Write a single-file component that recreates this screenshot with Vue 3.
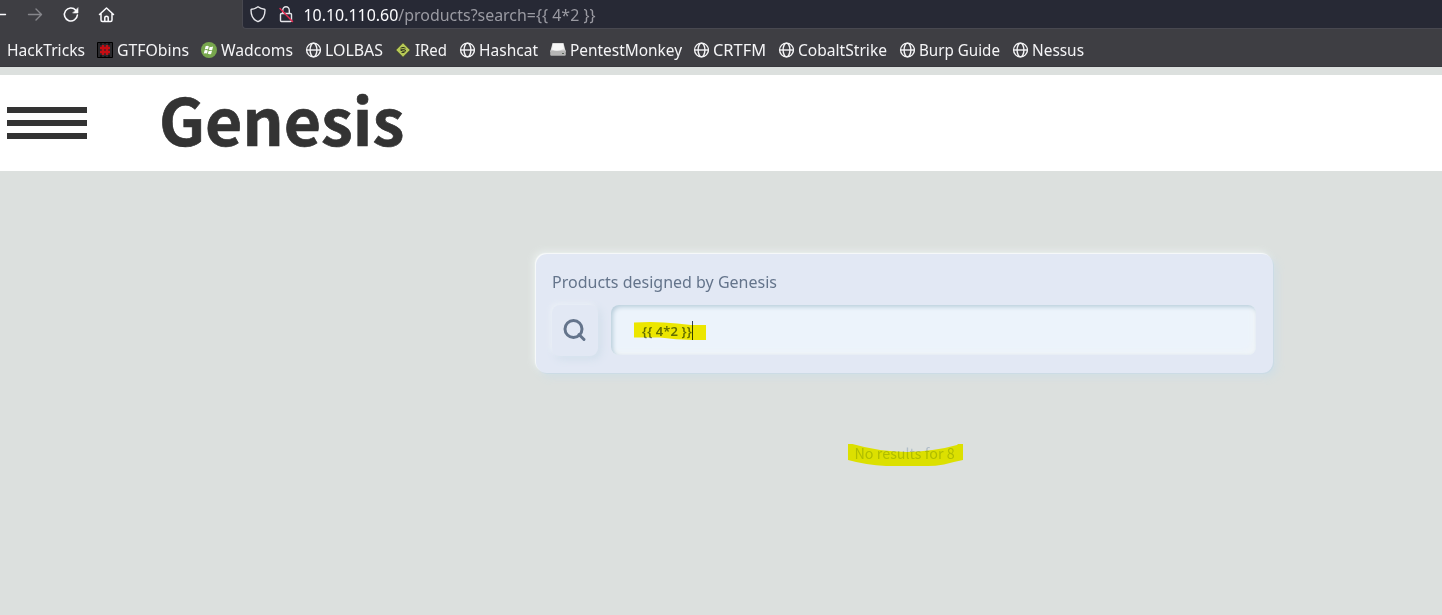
<script setup>
const bookmarks = [
  { label: 'HackTricks', icon: 'none', start: -13, text: 79 },
  { label: 'GTFObins', icon: 'hash', start: 97, text: 73 },
  { label: 'Wadcoms', icon: 'windows', start: 201, text: 73 },
  { label: 'LOLBAS', icon: 'globe', start: 305, text: 59 },
  { label: 'IRed', icon: 'diamond', start: 395, text: 33 },
  { label: 'Hashcat', icon: 'globe', start: 459, text: 60 },
  { label: 'PentestMonkey', icon: 'drive', start: 550, text: 113 },
  { label: 'CRTFM', icon: 'globe', start: 693, text: 54 },
  { label: 'CobaltStrike', icon: 'globe', start: 778, text: 90 },
  { label: 'Burp Guide', icon: 'globe', start: 899, text: 82 },
  { label: 'Nessus', icon: 'globe', start: 1012, text: 53 },
]
const columns = bookmarks
  .map((b, i) => (i < bookmarks.length - 1 ? `${bookmarks[i + 1].start - b.start}px` : '100px'))
  .join(' ')
</script>

<template>
  <div class="screen">
    <div class="chrome">
      <div class="toolbar">
        <svg class="nav" width="242" height="29" viewBox="0 0 242 29" fill="none" stroke="#fbfbfe" stroke-width="1.4" stroke-linecap="round" stroke-linejoin="round">
          <path d="M-6 14.5H5.5" />
          <path d="M28.5 14.5H41M36 9l5.5 5.5L36 20" stroke="#86868b" />
          <path d="M75.8 10.2A6.5 6.5 0 1 0 77.4 15" stroke-width="1.6" />
          <path d="M78 8v5h-5z" fill="#fbfbfe" stroke-width=".6" />
          <path d="M99.5 14.5L106.500 8l7 6.500M101 13.500V20q0 1.500 1.500 1.500h8q1.500 0 1.500-1.500v-6.500M104.800 21v-3.500q0-1.200 1.700-1.200t1.700 1.200V21" stroke-width="1.500" />
        </svg>
        <div class="address">
          <svg width="60" height="29" viewBox="0 0 60 29" fill="none" stroke="#e5e5ea" stroke-width="1.400" stroke-linecap="round" stroke-linejoin="round">
            <path d="M15 6.700C17 8.300 19 9 21.500 9.200Q22 9.300 22 10C22 16 19.500 20 15 21.700C10.500 20 8 16 8 10Q8 9.300 8.500 9.200C11 9 13 8.300 15 6.700Z" />
            <path d="M39.700 13V10.500a3.300 3.800 0 0 1 6.600 0V13M38.500 13.500h9q1 0 1 1v6q0 1-1 1h-9q-1 0-1-1v-6q0-1 1-1Z" />
            <path d="M37 8.500L49.500 21.500" stroke="#e22850" stroke-width="1.500" />
          </svg>
          <svg class="url" width="294" height="29">
            <text x="0.500" y="20.500" textLength="292" lengthAdjust="spacingAndGlyphs"><tspan class="host">10.10.110.60</tspan>/products?search=<tspan>{{ '\{\{ 4*2 \}\}' }}</tspan></text>
          </svg>
        </div>
      </div>
      <nav class="bookmarks" :style="{ gridTemplateColumns: columns }">
        <div v-for="b in bookmarks" :key="b.label" class="bookmark">
          <svg width="16" height="16" viewBox="0 0 16 16" class="favicon">
            <g v-if="b.icon === 'globe'" fill="none" stroke="#f4f4f6" stroke-width="1.400">
              <circle cx="8.500" cy="8" r="6.900" />
              <ellipse cx="8.500" cy="8" rx="3.400" ry="6.900" />
              <path d="M1.500 8h14" />
            </g>
            <g v-else-if="b.icon === 'hash'">
              <path d="M.5.500h15v15H.5z" fill="#29292d" stroke="#000" />
              <path d="M4 0v3M8 0v2M12 0v3M4 13v3M8 14v2M12 13v3" stroke="#000" />
              <path d="M6 3v10M10 3v10M3 6h10M3 10h10" stroke="#c50d13" stroke-width="2.400" />
            </g>
            <g v-else-if="b.icon === 'windows'">
              <circle cx="8" cy="8" r="8" fill="#77a64d" />
              <path d="M4.600 4.200q1.700-.8 3.200.1L7.100 7.500q-1.700-.8-3.300 0zM8.700 4.700q1.700.7 3.400-.1l-.9 3.300q-1.600.7-3.300-.1zM3.600 8.300q1.700-.8 3.200.1l-.8 3.200q-1.600-.8-3.200 0zM7.700 8.700q1.700.7 3.300 0l-.9 3.200q-1.600.7-3.300-.1z" fill="#fff" />
            </g>
            <g v-else-if="b.icon === 'diamond'">
              <path d="M8 .8L15.200 8 8 15.200.8 8z" fill="#b7c957" stroke="#343820" stroke-width=".6" />
              <path d="M5.500 6.200q2.500-1.700 5 0M5.500 8l2.500-.8 2.500 1v1H8L5.500 8M6.500 10.500h3" fill="none" stroke="#343820" />
            </g>
            <g v-else-if="b.icon === 'drive'">
              <path d="M2.500 1h11l2.300 9H.2z" fill="#dedede" />
              <path d="M.2 8.500h15.600V12.500q0 1.200-1.200 1.200H1.400q-1.200 0-1.200-1.200z" fill="#b5b5b5" />
              <path d="M3 2h10l1 4.500q-6 4-12 1z" fill="#f7f7f7" />
              <path d="M12 11.500h2" stroke="#58635a" />
            </g>
          </svg>
          <svg class="label" :width="b.text + 2" height="22">
            <text x="0" y="17" :textLength="b.text - 1" lengthAdjust="spacingAndGlyphs">{{ b.label }}</text>
          </svg>
        </div>
      </nav>
    </div>

    <header class="site-header">
      <div class="menu"><i></i><i></i><i></i></div>
      <h1>Genesis</h1>
    </header>

    <main>
      <section class="panel">
        <label>Products designed by Genesis</label>
        <div class="row">
          <div class="search-btn">
            <svg width="24" height="24" viewBox="0 0 24 24" fill="none" stroke="#64748b" stroke-width="3">
              <circle cx="10.500" cy="11" r="8.500" />
              <path d="M16 16.500L21 21.500" stroke-linecap="round" />
            </svg>
          </div>
          <div class="field">
            <span class="query">{{ '\{\{ 4*2 \}\}' }}</span><span class="caret"></span>
            <svg class="marker" width="72" height="20" viewBox="0 0 72 20"><path d="M0 1.500Q22 0 43 2.500L57 4H72V19H58Q42 18.500 26 16.500H0Z" fill="#fff200" /></svg>
          </div>
        </div>
      </section>
      <div class="results">
        <span>No results for 8</span>
        <svg class="marker" width="116" height="24" viewBox="0 0 116 24"><path d="M0 1H4.500Q30 8.500 59 9Q88 8 109 2L110 1H115V17Q105 19 96 21.500Q87 23 80 23H38Q18 22 0 17Z" fill="#ff0" /></svg>
      </div>
    </main>
  </div>
</template>

<style>
body { margin: 0; background: #dce0de; }
</style>

<style scoped>
.screen { width: 1442px; height: 615px; overflow: hidden; background: #dce0de; font-family: "Noto Sans", sans-serif; }
.chrome { height: 67px; background: #3e3e43; box-sizing: border-box; border-bottom: 1px solid #38383d; overflow: hidden; }
.toolbar { display: flex; height: 29px; }
.nav { flex: none; }
.address { flex: 1; display: flex; background: #272935; border-left: 1px solid #484850; border-bottom: 1px solid #484850; border-bottom-left-radius: 4px; }
.url text { font-size: 16px; fill: #9a9aa2; }
.url .host { fill: #fbfbfe; }
.bookmarks { display: grid; margin-left: -13px; height: 42px; align-items: center; }
.bookmark { display: flex; align-items: center; gap: 4px; }
.favicon, .label { flex: none; }
.label text { font-size: 15.500px; fill: #f4f4f6; }
.site-header { margin-top: 8px; height: 96px; background: #fff; display: flex; align-items: center; }
.menu { width: 80px; margin-left: 7px; display: grid; gap: 7px; }
.menu i { height: 6px; background: #333; }
h1 { margin: 0 0 0 72px; padding-bottom: 10px; font: 700 64.300px/86px "Noto Sans CJK JP", "Noto Sans", sans-serif; color: #333; -webkit-text-stroke: .7px #333; }
main { padding-top: 83px; }
.panel { box-sizing: border-box; width: 737px; height: 119px; margin-left: 536px; padding: 16px 17px 18px 16px; border-radius: 11px; background: #e2e8f4; box-shadow: -1px -1px 1px #f8fafb, 1px 1px 1px #cbdbe5, -3px -3px 7px #e9eeec, 4px 4px 9px #d0dee5; }
.panel label { display: block; font-size: 16px; line-height: 24px; color: #64748b; }
.row { display: flex; gap: 13px; margin-top: 11px; }
.search-btn { width: 46px; height: 51px; border-radius: 8px; display: grid; place-items: center; background: #e2e8f4; box-shadow: -2px -2px 5px #ebf0f7, 3px 3px 8px #d0deea; }
.search-btn svg { margin-bottom: 1px; }
.field { flex: 1; position: relative; display: flex; align-items: center; padding-left: 31px; height: 50px; border-radius: 8px; box-sizing: border-box; background: #ecf3fb; box-shadow: inset 2px 2px 4px #b9cedb, inset -3px -3px 6px #f0f4f7; }
.query { font-size: 13px; font-weight: 600; line-height: 18px; padding-top: 2px; letter-spacing: .1px; color: #64748b; }
.caret { width: 1px; height: 19px; background: #334155; }
.marker { position: absolute; mix-blend-mode: multiply; }
.field .marker { left: 23px; top: 16px; }
.results { position: relative; width: 116px; height: 24px; margin: 70px 0 0 848px; }
.results span { display: block; padding-left: 6.500px; font: 14.350px/19px "Noto Sans CJK JP", sans-serif; color: #b0bdc8; white-space: nowrap; }
.results .marker { left: 0; top: 0; }
</style>
